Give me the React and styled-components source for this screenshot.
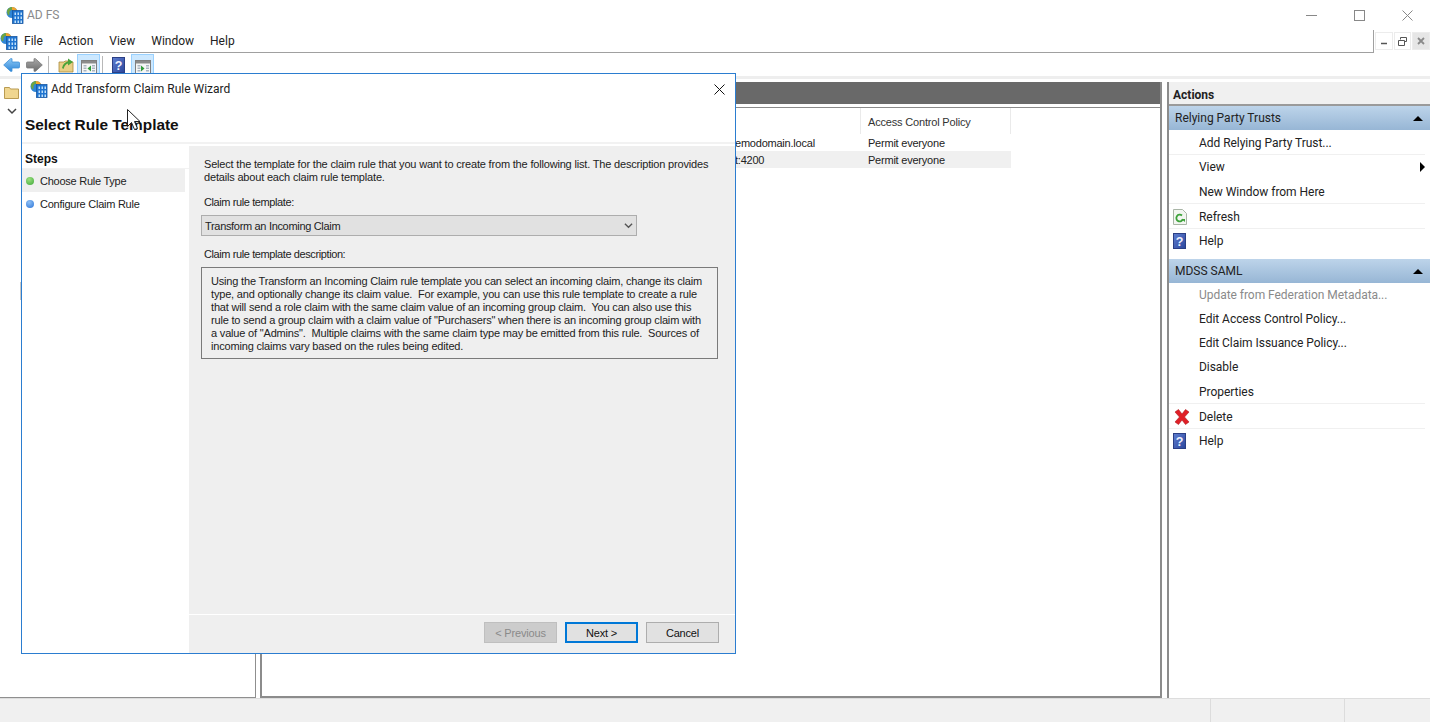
import React from 'react';
import styled, { createGlobalStyle } from 'styled-components';

const Global = createGlobalStyle`
  html,body{margin:0;padding:0;background:#fff;overflow:hidden;}
  *{box-sizing:border-box;}
`;

const AppIcon = ({ size = 18 }) => (
  <svg width={size} height={size} viewBox="0 0 18 18">
    <circle cx="6" cy="6.500" r="5.500" fill="#2f86d6" />
    <path d="M1 5c1-3 3-4 5-4 1 1 0 3-1.500 3.500S4 8 3 9 1 7 1 5z" fill="#6fa53f" />
    <path d="M6 1c2.500 0 4 1 5 3L8 5.500 6 4z" fill="#f0a52e" />
    <rect x="6.500" y="4.500" width="10.500" height="13" fill="#1f74d0" stroke="#1a57a0" strokeWidth=".8" />
    <path d="M8.500 6.500H10v2.500H8.500zM11.500 6.500H13v2.500h-1.500zM14.500 6.500H16v2.500h-1.500zM8.500 10.500H10V13H8.500zM11.500 10.500H13V13h-1.500zM14.500 10.500H16V13h-1.500zM8.500 14.500H10V17H8.500zM11.500 14.500H13V17h-1.500zM14.500 14.500H16V17h-1.500z" fill="#bfe0fa" />
  </svg>
);

const ArrowIcon = ({ id, light, dark, edge, flip }) => (
  <svg width="17" height="14" viewBox="0 0 17 14" style={{ transform: flip ? 'scaleX(-1)' : 'none' }}>
    <defs>
      <linearGradient id={id} x1="0" y1="0" x2="0" y2="1">
        <stop offset="0" stopColor={light} />
        <stop offset="1" stopColor={dark} />
      </linearGradient>
    </defs>
    <path d="M.7 7L7.500.7H9v3.300h6.500q1 0 1 1v4q0 1-1 1H9v3.300H7.500z" fill={`url(#${id})`} stroke={edge} strokeWidth=".8" />
  </svg>
);

const FolderUp = () => (
  <svg width="16" height="16" viewBox="0 0 16 16">
    <path d="M1 5h5l1-1h3v1h5v10H1z" fill="#e9cf86" stroke="#a98c3e" strokeWidth=".8" />
    <path d="M4 11c1-4 3-6 6-6.500V1.500L15 5l-5 3.500V6.500C8 7 6.500 8.500 5.500 12z" fill="#4aa33a" />
  </svg>
);

const HelpIcon = ({ size = 13 }) => (
  <svg width={size} height={size + 3} viewBox="0 0 13 16">
    <defs>
      <linearGradient id="helpFill" x1="0" y1="0" x2="1" y2="1">
        <stop offset="0" stopColor="#5f7fd0" />
        <stop offset="1" stopColor="#2b459c" />
      </linearGradient>
    </defs>
    <rect x=".5" y=".5" width="12" height="15" fill="url(#helpFill)" stroke="#2b3f85" />
    <text x="6.500" y="12.500" textAnchor="middle" fontFamily="Liberation Sans, sans-serif" fontWeight="700" fontSize="12.500" fill="#eef2fd">?</text>
  </svg>
);

const PaneIcon = ({ side }) => (
  <svg width="16" height="14" viewBox="0 0 16 14">
    <rect x=".5" y=".5" width="15" height="13" fill="#f6f6f6" stroke="#7f7f7f" />
    <rect x="1" y="1" width="14" height="2.500" fill="#8b8b8b" />
    <path d="M2.500 5h3v1.500h-3zM2.500 7.500h3V9h-3zM2.500 10h3v1.500h-3zM11 5h3v1.500h-3zM11 7.500h3V9h-3zM11 10h3v1.500h-3z" fill="#a9b4c0" />
    <path d={side === 'left' ? 'M10 5.500v6L6.500 8.500z' : 'M6 5.500v6l3.500-3z'} fill="#2f9a38" />
  </svg>
);

const FolderIcon = () => (
  <svg width="15" height="14" viewBox="0 0 15 14">
    <path d="M.5 2.500h5l1 1.500h8v9.500H.5z" fill="#f0d68f" stroke="#b99b52" />
  </svg>
);

const Chevron = ({ size = 9, color = '#444' }) => (
  <svg width={size} height={size} viewBox="0 0 10 10">
    <path d="M1 3l4 4 4-4" fill="none" stroke={color} strokeWidth="1.500" />
  </svg>
);

const RefreshIcon = () => (
  <svg width="14" height="16" viewBox="0 0 14 16">
    <path d="M.5.500h9l4 4v11H.5z" fill="#f3f6f1" stroke="#a9b5a6" />
    <path d="M10 10a3.400 3.400 0 1 1-1-3.500" fill="none" stroke="#3da23a" strokeWidth="1.800" />
    <path d="M8 10l4 0 0 3z" fill="#3da23a" />
  </svg>
);

const DeleteIcon = () => (
  <svg width="18" height="16" viewBox="0 0 18 16">
    <path d="M2 3l3.500-2.500L9 5l3.500-4.500L16 3l-4.500 5 4.500 5-3.500 2.500L9 11l-3.500 4.500L2 13l4.500-5z" fill="#e01f26" stroke="#b01a1e" strokeWidth=".6" />
  </svg>
);

const Root = styled.div`
  position:relative;
  width:1430px;height:722px;overflow:hidden;
  display:flex;flex-direction:column;
  background:#fff;
  font-family:Roboto,"Noto Sans",sans-serif;
  font-size:12px;color:#1e1e1e;
`;

const TitleBar = styled.div`
  height:30px;display:flex;align-items:center;padding-left:6px;gap:3px;
  color:#8a8a8a;
`;
const TitleText = styled.span`flex:1;font-size:12px;`;
const WindowButton = styled.div`
  width:45px;height:30px;display:flex;align-items:center;justify-content:center;
  svg{display:block;}
`;

const MenuBar = styled.div`
  height:23px;display:flex;
`;
const MenuLeft = styled.div`
  flex:1;display:flex;align-items:center;
  border-bottom:1px solid #a0a0a0;border-right:1px solid #a0a0a0;
`;
const MenuIcon = styled.div`width:20px;height:18px;margin-right:4px;display:flex;`;
const MenuItem = styled.span`margin-right:16px;font-size:12px;color:#222;`;
const MdiGroup = styled.div`
  width:56px;display:flex;gap:1px;align-items:flex-start;padding:2px 0 0 1px;
`;
const MdiButton = styled.div`
  width:18px;height:18px;border:1px solid #ececec;display:flex;align-items:center;justify-content:center;
  background:${p => (p.$off ? '#e6e6e6' : '#fff')};
`;

const ToolBar = styled.div`
  height:26px;display:flex;align-items:center;
  border-bottom:3px solid #eeeeee;padding:1px 0 0;
`;
const ToolButton = styled.div`
  width:23px;height:22px;display:flex;align-items:center;justify-content:center;
  margin-left:${p => p.$ml || 0}px;
  padding-top:${p => (p.$on ? 3 : 0)}px;
  background:${p => (p.$on ? '#cce8ff' : 'transparent')};
  border:1px solid ${p => (p.$on ? '#99d1ff' : 'transparent')};
`;
const ToolDivider = styled.div`
  width:1px;height:18px;background:#b8b8b8;margin:0 ${p => p.$mr}px 0 2px;
`;

const Workspace = styled.div`
  flex:1;min-height:0;display:grid;grid-template-columns:256px 1fr 263px;column-gap:4px;
  padding-top:3px;
`;
const TreePane = styled.div`
  position:relative;
  border-right:1px solid #8f8f8f;border-bottom:1px solid #8f8f8f;
  padding:3px 0 0 4px;display:flex;flex-direction:column;gap:7px;
  svg:nth-child(2){margin-left:3px;}
`;
const TreeGrip = styled.div`
  position:absolute;left:20px;top:200px;width:1px;height:18px;background:#c8c8c8;
`;
const CenterPane = styled.div`
  margin-right:1px;border:2px solid #8c8c8c;border-top:0;display:flex;flex-direction:column;
`;
const CenterHead = styled.div`
  height:25px;background:#696969;border-bottom:3px solid #fff;box-shadow:0 1px 0 #8a8a8a;margin-bottom:1px;flex:none;
`;
const ListHead = styled.div`
  height:26px;display:grid;grid-template-columns:599px 150px;
`;
const HeadCell = styled.div`
  border-right:1px solid #eaeaea;padding:8px 0 0 7px;
  font-family:"Liberation Sans",sans-serif;font-size:11px;letter-spacing:-.18px;color:#333;
`;
const ListRow = styled.div`
  height:17px;width:749px;display:grid;grid-template-columns:466px 133px 150px;align-items:center;
  background:${p => (p.$alt ? '#f0f0f0' : '#fff')};
  font-family:"Liberation Sans",sans-serif;font-size:11px;letter-spacing:-.22px;color:#222;
`;
const ListCell = styled.div`padding-left:7px;white-space:nowrap;overflow:hidden;`;

const ActionsPane = styled.div`
  border-left:2px solid #8c8c8c;display:flex;flex-direction:column;
`;
const ActionsHead = styled.div`
  height:24px;background:#f0f0f0;padding:3px 0 0 4px;display:flex;align-items:center;
  font-weight:700;font-size:12px;color:#222;border-bottom:2px solid #9a9a9a;
`;
const SectionHead = styled.div`
  height:24px;margin-top:${p => p.$gap || 0}px;
  background:linear-gradient(#bdd4ea,#97b6d5);
  display:flex;align-items:center;justify-content:space-between;padding:0 7px 0 6px;
  font-size:12px;color:#222;
`;
const UpTriangle = styled.div`
  width:0;height:0;border-left:5px solid transparent;border-right:5px solid transparent;border-bottom:5px solid #000;
`;
const ActionRow = styled.div`
  height:${p => p.$h || 24}px;display:flex;align-items:center;margin-right:5px;padding-top:1px;
  border-bottom:1px solid ${p => (p.$sep ? '#f0f0f0' : 'transparent')};
  color:${p => (p.$off ? '#8a8a8a' : '#222')};
  font-size:12px;letter-spacing:-.04px;
`;
const ActionIcon = styled.div`width:30px;padding-left:4px;display:flex;align-items:center;`;
const RightTriangle = styled.div`
  margin-left:auto;width:0;height:0;border-top:5px solid transparent;border-bottom:5px solid transparent;border-left:5px solid #000;
`;

const StatusBar = styled.div`
  height:24px;background:#f0f0f0;border-top:1px solid #ddd;display:grid;grid-template-columns:1211px 134px 1fr;
`;
const StatusCell = styled.div`border-right:1px solid #dcdcdc;`;

const Dialog = styled.div`
  position:absolute;left:21px;top:73px;width:715px;height:581px;
  background:#fff;border:1px solid #2b7dd0;display:flex;flex-direction:column;
  font-family:"Liberation Sans",sans-serif;font-size:11px;letter-spacing:-.18px;color:#222;
`;
const DialogTitle = styled.div`
  height:30px;flex:none;display:flex;align-items:center;padding:0 10px 0 8px;gap:3px;
  font-family:Roboto,"Noto Sans",sans-serif;font-size:12px;letter-spacing:0;color:#222;
`;
const DialogTitleText = styled.span`flex:1;`;
const Heading = styled.div`
  height:40px;flex:none;padding:12px 0 0 3px;font-weight:700;font-size:15.4px;letter-spacing:0;color:#111;
  border-bottom:2px solid #f2f2f2;
`;
const DialogBody = styled.div`flex:1;min-height:0;display:flex;padding-top:2px;`;
const Steps = styled.div`width:167px;flex:none;display:flex;flex-direction:column;letter-spacing:-.25px;`;
const StepsTitle = styled.div`
  height:23px;padding:6px 0 0 3px;font-weight:700;font-size:12px;letter-spacing:0;border-bottom:1px solid #f2f2f2;color:#111;
`;
const StepRow = styled.div`
  height:23px;margin-right:4px;display:flex;align-items:center;gap:6px;padding-left:4px;
  background:${p => (p.$active ? '#efefef' : 'transparent')};
`;
const StepDot = styled.span`
  width:8px;height:8px;border-radius:50%;
  background:radial-gradient(circle at 40% 30%,${p => p.$light},${p => p.$color});
`;
const Main = styled.div`
  flex:1;min-width:0;background:#efefef;display:flex;flex-direction:column;
`;
const MainContent = styled.div`
  flex:1;padding:12px 17px 0 12px;
`;
const Intro = styled.div`line-height:13px;margin-left:3px;white-space:pre;`;
const FieldLabel = styled.div`margin:12px 0 6px 3px;line-height:13px;letter-spacing:-.4px;`;
const Select = styled.div`
  width:436px;height:21px;background:#e1e1e1;border:1px solid #adadad;letter-spacing:-.32px;
  display:flex;align-items:center;justify-content:space-between;padding:0 3px 0 3px;
`;
const DescriptionBox = styled.div`
  width:517px;height:92px;border:1px solid #7a7a7a;padding:7px 0 0 9px;line-height:13px;white-space:pre;
`;
const Footer = styled.div`
  height:39px;flex:none;border-top:1px solid #fff;display:flex;justify-content:flex-end;gap:8px;
  padding:7px 16px 0 0;
`;
const Button = styled.div`
  width:73px;height:21px;display:flex;align-items:center;justify-content:center;
  background:${p => (p.$disabled ? '#cccccc' : '#e1e1e1')};
  color:${p => (p.$disabled ? '#8a8a8a' : '#111')};
  border:${p => (p.$primary ? '2px solid #0078d7' : `1px solid ${p.$disabled ? '#bfbfbf' : '#adadad'}`)};
`;
const Cursor = styled.svg`position:absolute;left:127px;top:109px;`;

const actionsTop = [
  { label: 'Add Relying Party Trust...', sep: true, h: 25 },
  { label: 'View', arrow: true },
  { label: 'New Window from Here', sep: true, h: 25 },
  { label: 'Refresh', icon: <RefreshIcon />, sep: true, h: 25 },
  { label: 'Help', icon: <HelpIcon /> },
];
const actionsBottom = [
  { label: 'Update from Federation Metadata...', off: true },
  { label: 'Edit Access Control Policy...' },
  { label: 'Edit Claim Issuance Policy...' },
  { label: 'Disable' },
  { label: 'Properties', sep: true, h: 25 },
  { label: 'Delete', icon: <DeleteIcon />, sep: true, h: 25 },
  { label: 'Help', icon: <HelpIcon /> },
];

const renderAction = a => (
  <ActionRow key={a.label} $sep={a.sep} $h={a.h} $off={a.off}>
    <ActionIcon>{a.icon}</ActionIcon>
    {a.label}
    {a.arrow && <RightTriangle />}
  </ActionRow>
);

export default function App() {
  return (
    <Root>
      <Global />
      <TitleBar>
        <AppIcon />
        <TitleText>AD FS</TitleText>
        <WindowButton>
          <svg width="11" height="11"><path d="M0 5.500h11" stroke="#888" /></svg>
        </WindowButton>
        <WindowButton>
          <svg width="11" height="11"><rect x=".5" y=".5" width="10" height="10" fill="none" stroke="#888" /></svg>
        </WindowButton>
        <WindowButton>
          <svg width="11" height="11"><path d="M.5.500l10 10M10.500.500l-10 10" stroke="#888" /></svg>
        </WindowButton>
      </TitleBar>
      <MenuBar>
        <MenuLeft>
          <MenuIcon><AppIcon /></MenuIcon>
          {['File', 'Action', 'View', 'Window', 'Help'].map(m => <MenuItem key={m}>{m}</MenuItem>)}
        </MenuLeft>
        <MdiGroup>
          <MdiButton><svg width="8" height="8"><path d="M1 6.500h6" stroke="#555" strokeWidth="1.500" /></svg></MdiButton>
          <MdiButton>
            <svg width="9" height="9"><path d="M2.500 2.500V.5h6v4h-2M.5 3.500h6v5h-6z" fill="none" stroke="#555" /></svg>
          </MdiButton>
          <MdiButton $off>
            <svg width="8" height="8"><path d="M1 1l6 6M7 1L1 7" stroke="#8a8a8a" strokeWidth="1.800" /></svg>
          </MdiButton>
        </MdiGroup>
      </MenuBar>
      <ToolBar>
        <ToolButton><ArrowIcon id="backFill" light="#8cc8f5" dark="#2f86d8" edge="#3d8fd8" /></ToolButton>
        <ToolButton><ArrowIcon id="nextFill" light="#a8a8a8" dark="#6e6e6e" edge="#7a7a7a" flip /></ToolButton>
        <ToolDivider $mr={5} />
        <ToolButton><FolderUp /></ToolButton>
        <ToolButton $on><PaneIcon side="left" /></ToolButton>
        <ToolDivider $mr={4} />
        <ToolButton><HelpIcon /></ToolButton>
        <ToolButton $on $ml={1}><PaneIcon side="right" /></ToolButton>
      </ToolBar>
      <Workspace>
        <TreePane>
          <FolderIcon />
          <Chevron size={10} />
          <TreeGrip />
        </TreePane>
        <CenterPane>
          <CenterHead />
          <ListHead>
            <HeadCell />
            <HeadCell>Access Control Policy</HeadCell>
          </ListHead>
          <ListRow>
            <ListCell />
            <ListCell>emodomain.local</ListCell>
            <ListCell>Permit everyone</ListCell>
          </ListRow>
          <ListRow $alt>
            <ListCell />
            <ListCell>t:4200</ListCell>
            <ListCell>Permit everyone</ListCell>
          </ListRow>
        </CenterPane>
        <ActionsPane>
          <ActionsHead>Actions</ActionsHead>
          <SectionHead>Relying Party Trusts<UpTriangle /></SectionHead>
          {actionsTop.map(renderAction)}
          <SectionHead $gap={6}>MDSS SAML<UpTriangle /></SectionHead>
          {actionsBottom.map(renderAction)}
        </ActionsPane>
      </Workspace>
      <StatusBar>
        <StatusCell />
        <StatusCell />
      </StatusBar>

      <Dialog>
        <DialogTitle>
          <AppIcon />
          <DialogTitleText>Add Transform Claim Rule Wizard</DialogTitleText>
          <svg width="11" height="11"><path d="M.5.500l10 10M10.500.500l-10 10" stroke="#111" /></svg>
        </DialogTitle>
        <Heading>Select Rule Template</Heading>
        <DialogBody>
          <Steps>
            <StepsTitle>Steps</StepsTitle>
            <StepRow $active><StepDot $color="#3ea83a" $light="#9be07f" />Choose Rule Type</StepRow>
            <StepRow><StepDot $color="#2a74d8" $light="#8fc0f5" />Configure Claim Rule</StepRow>
          </Steps>
          <Main>
            <MainContent>
              <Intro>
                Select the template for the claim rule that you want to create from the following list. The description provides<br />
                details about each claim rule template.
              </Intro>
              <FieldLabel>Claim rule template:</FieldLabel>
              <Select>Transform an Incoming Claim<Chevron size={9} color="#555" /></Select>
              <FieldLabel>Claim rule template description:</FieldLabel>
              <DescriptionBox>
                Using the Transform an Incoming Claim rule template you can select an incoming claim, change its claim<br />
                type, and optionally change its claim value.  For example, you can use this rule template to create a rule<br />
                that will send a role claim with the same claim value of an incoming group claim.  You can also use this<br />
                rule to send a group claim with a claim value of "Purchasers" when there is an incoming group claim with<br />
                a value of "Admins".  Multiple claims with the same claim type may be emitted from this rule.  Sources of<br />
                incoming claims vary based on the rules being edited.
              </DescriptionBox>
            </MainContent>
            <Footer>
              <Button $disabled>&lt; Previous</Button>
              <Button $primary>Next &gt;</Button>
              <Button>Cancel</Button>
            </Footer>
          </Main>
        </DialogBody>
      </Dialog>

      <Cursor width="13" height="21" viewBox="0 0 13 21">
        <path d="M.5.500v17l4-4 3 7 3-1-3-7h5.500z" fill="#fff" stroke="#222" />
      </Cursor>
    </Root>
  );
}
